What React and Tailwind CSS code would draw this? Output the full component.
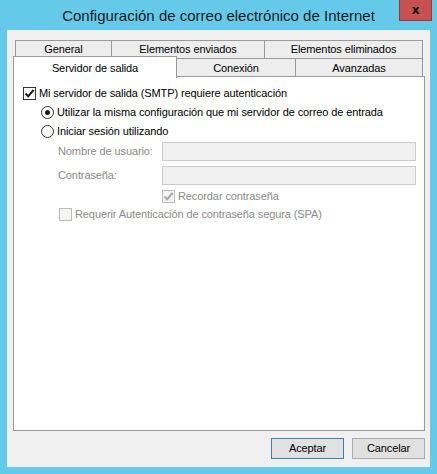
import React from 'react';

const Check = ({ color = '#1a1a1a' }) => (
  <svg width="11" height="11" viewBox="0 0 11 11">
    <path d="M1.5 5.5 L4.2 8.3 L9.5 2" fill="none" stroke={color} strokeWidth="2" />
  </svg>
);

const Checkbox = ({ checked, disabled }) => (
  <span
    className={`w-[13px] h-[13px] flex items-center justify-center border shrink-0 ${
      disabled ? 'border-[#bcbcbc] bg-[#f4f4f4]' : 'border-[#333333] bg-white'
    }`}
  >
    {checked && <Check color={disabled ? '#a8a8a8' : '#1a1a1a'} />}
  </span>
);

const Radio = ({ checked }) => (
  <span className="w-[13px] h-[13px] rounded-full border border-[#333333] bg-white flex items-center justify-center shrink-0">
    {checked && <span className="w-[5px] h-[5px] rounded-full bg-[#1a1a1a]" />}
  </span>
);

const Tab = ({ label, className }) => (
  <div
    className={`h-[19px] border border-[#9a9a9a] bg-[#ededed] flex items-center justify-center ${className}`}
  >
    {label}
  </div>
);

export default function App() {
  return (
    <div className="w-[437px] h-[474px] bg-[#65caea] flex flex-col font-['Liberation_Sans',sans-serif] text-[11px] tracking-[-0.1px] text-black whitespace-nowrap">
      {/* Title bar */}
      <div className="relative h-[30px] flex items-center justify-center">
        <span className="text-[15px] tracking-normal text-[#1b1b1b] pt-[2px]">
          Configuración de correo electrónico de Internet
        </span>
        <div className="absolute right-[5px] top-0 w-[33px] h-[21px] bg-[#c75050] border border-[#8e3b3b] border-t-0 flex items-center justify-center">
          <span className="font-['DejaVu_Sans',sans-serif] font-bold text-[12px] leading-none text-black">x</span>
        </div>
      </div>

      {/* Client area */}
      <div className="mx-[7px] h-[437px] bg-[#f0f0f0] pl-[6px] pr-[5px] pt-[10px] flex flex-col">
        {/* Back row of tabs */}
        <div className="flex ml-[2px]">
          <Tab label="General" className="w-[97px]" />
          <Tab label="Elementos enviados" className="w-[154px] -ml-px" />
          <Tab label="Elementos eliminados" className="w-[159px] -ml-px" />
        </div>

        {/* Front row of tabs */}
        <div className="flex items-start h-[19px] -mt-px">
          <div className="relative z-10 w-[164px] h-[22px] -mt-[2px] border border-b-0 border-[#9a9a9a] bg-white flex justify-center pt-[3px]">
            Servidor de salida
          </div>
          <Tab label="Conexión" className="w-[120px] -ml-px pt-[2px]" />
          <Tab label="Avanzadas" className="w-[128px] -ml-px pt-[2px]" />
        </div>

        {/* Panel */}
        <div className="h-[355px] -mt-px border border-[#9a9a9a] bg-white pt-[7px] flex flex-col">
          <div className="h-[19px] flex items-center pl-[9px]">
            <Checkbox checked />
            <span className="ml-[3px]">Mi servidor de salida (SMTP) requiere autenticación</span>
          </div>
          <div className="h-[19px] flex items-center pl-[27px]">
            <Radio checked />
            <span className="ml-[3px]">Utilizar la misma configuración que mi servidor de correo de entrada</span>
          </div>
          <div className="h-[19px] flex items-center pl-[27px]">
            <Radio />
            <span className="ml-[3px]">Iniciar sesión utilizando</span>
          </div>

          <div className="flex items-center pl-[44px] mt-[1px] text-[#8a8a8a]">
            <span className="w-[104px]">Nombre de usuario:</span>
            <div className="w-[254px] h-[19px] border border-[#cccccc] bg-[#f0f0f0]" />
          </div>
          <div className="flex items-center pl-[44px] mt-[5px] text-[#8a8a8a]">
            <span className="w-[104px]">Contraseña:</span>
            <div className="w-[254px] h-[19px] border border-[#cccccc] bg-[#f0f0f0]" />
          </div>

          <div className="h-[18px] mt-[2px] flex items-center pl-[148px] text-[#8a8a8a]">
            <Checkbox checked disabled />
            <span className="ml-[3px]">Recordar contraseña</span>
          </div>
          <div className="h-[19px] flex items-center pl-[45px] text-[#8a8a8a]">
            <Checkbox disabled />
            <span className="ml-[3px]">Requerir Autenticación de contraseña segura (SPA)</span>
          </div>
        </div>

        {/* Buttons */}
        <div className="flex justify-end gap-[8px] mt-[7px]">
          <button className="w-[73px] h-[21px] border border-[#3c7fb1] bg-[#e1e1e1] flex items-center justify-center">
            Aceptar
          </button>
          <button className="w-[73px] h-[21px] border border-[#adadad] bg-[#e1e1e1] flex items-center justify-center">
            Cancelar
          </button>
        </div>
      </div>
    </div>
  );
}
